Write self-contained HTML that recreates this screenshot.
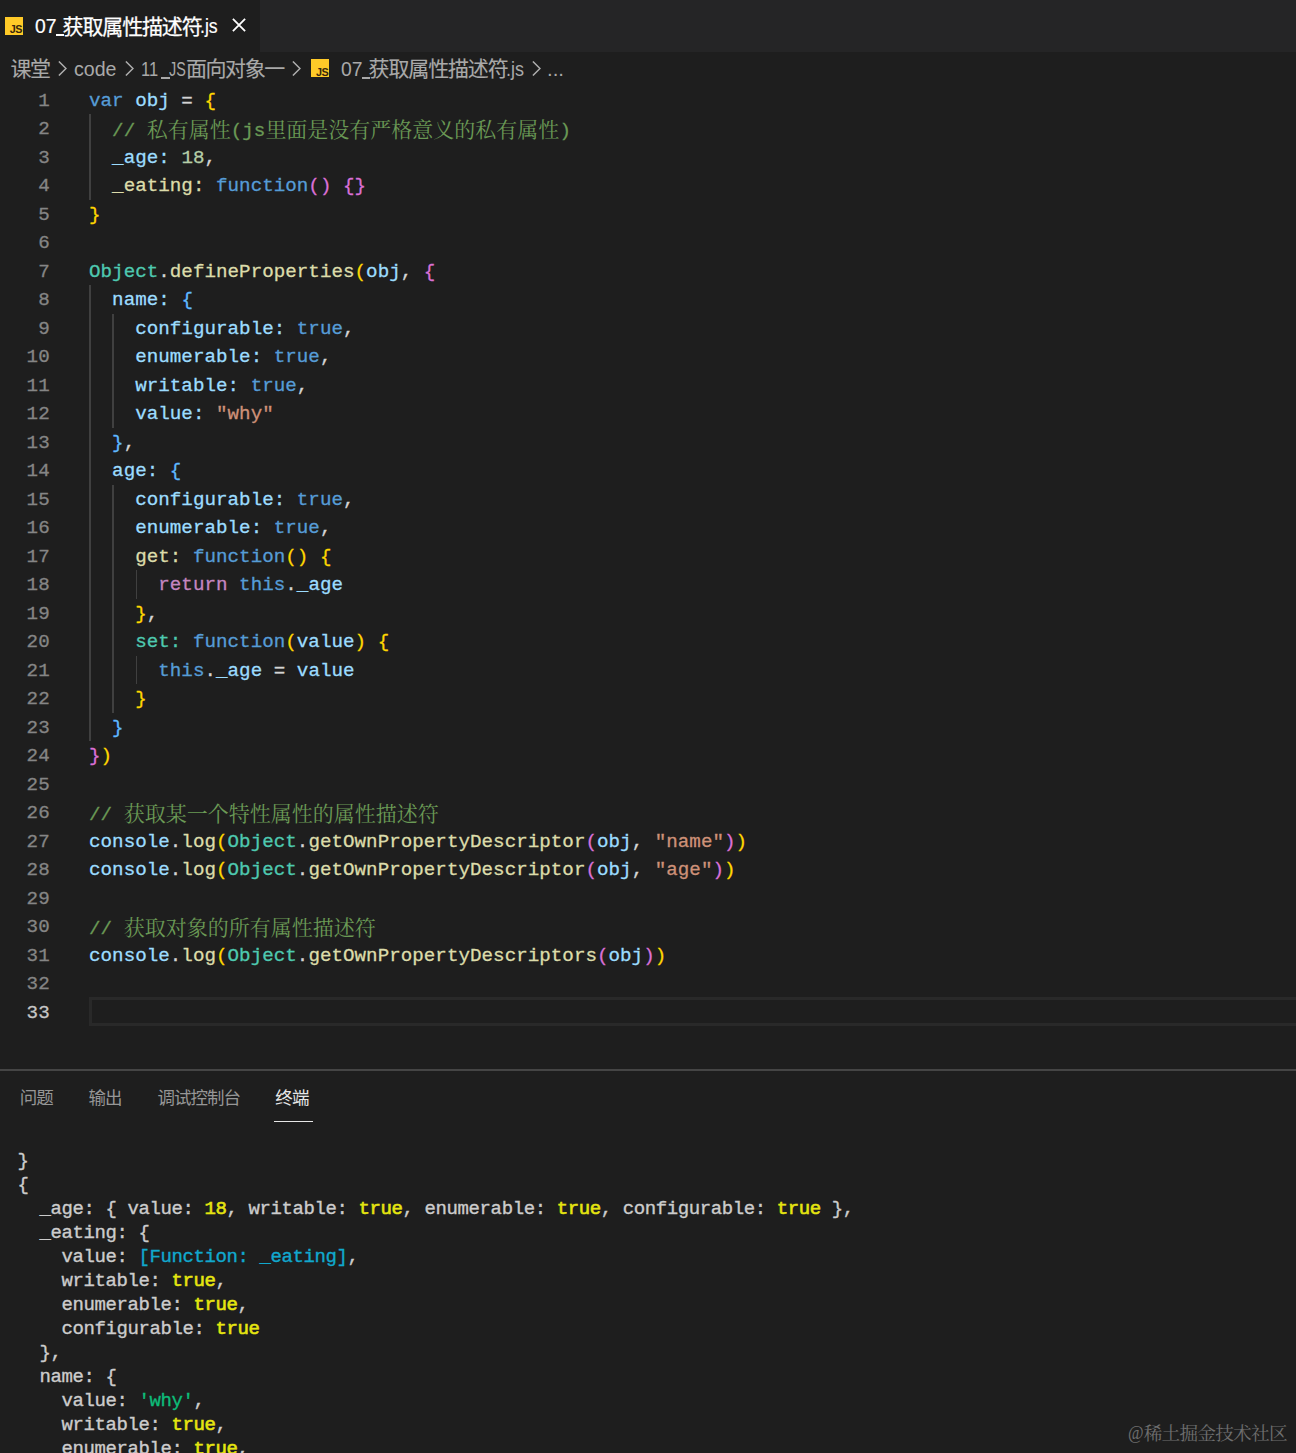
<!DOCTYPE html>
<html lang="zh"><head><meta charset="utf-8"><title>07_获取属性描述符.js</title>
<style>
*{margin:0;padding:0;box-sizing:border-box}
html,body{width:1296px;height:1453px;background:#1e1e1e;overflow:hidden}
body{font-family:"Liberation Sans",sans-serif;position:relative}
#app{position:absolute;left:0;top:0;width:1296px;height:1453px;overflow:hidden;background:#1e1e1e}
.abs{position:absolute}
.cjt{display:block;white-space:pre;font-family:"Liberation Sans","Noto Sans CJK SC",sans-serif}
.cl .cjs{font-family:"Liberation Serif","Noto Serif CJK SC",serif;font-size:21px;letter-spacing:0;-webkit-text-stroke:0;position:relative;top:0.5px}
.tabbar{position:absolute;left:0;top:0;width:1296px;height:52px;background:#252526}
.tab{position:absolute;left:0;top:0;width:259.5px;height:52px;background:#1e1e1e}
.uit{position:absolute;white-space:pre;font-size:19.6px;line-height:24px;height:24px;transform-origin:0 50%;display:block}
.jsi{position:absolute;width:18px;height:18px;background:#ffca28}
.jsi span{position:absolute;right:1.2px;bottom:1.7px;font:bold 10.8px/8px "Liberation Sans",sans-serif;color:#37260c;letter-spacing:-0.55px}
.ln,.cl,.tl{position:absolute;font-family:"Liberation Mono",monospace;white-space:pre}
.ln,.cl{letter-spacing:0.03px;-webkit-text-stroke:0.3px currentColor}
.cl span{-webkit-text-stroke:0.3px currentColor}
.ln{left:0;width:49.7px;text-align:right;color:#858585;font-size:19.2px;height:28.5px;line-height:28.5px;margin-top:1.0px}
.ln.cur{color:#c6c6c6}
.cl{left:89.0px;color:#d4d4d4;font-size:19.2px;height:28.5px;line-height:28.5px;margin-top:1.0px}
.ig{position:absolute;width:1.5px}
.curline{position:absolute;left:89.3px;top:997px;width:1300px;height:28.9px;border:3px solid #292929}
.pborder{position:absolute;left:0;top:1069.4px;width:1296px;height:1.6px;background:#454545}
.tl{-webkit-text-stroke:0.35px currentColor;left:17.5px;color:#cccccc;font-size:19.0px;letter-spacing:-0.4px;height:24.0px;line-height:24.0px;margin-top:0px}
.ty{color:#e5e510;-webkit-text-stroke:0.6px #e5e510}
.ptab{position:absolute;top:1090.5px;height:17px}
.pul{position:absolute;left:274px;top:1120.5px;width:38.8px;height:1.5px;background:#e7e7e7}
.wm{position:absolute;left:1128.3px;top:1422.0px;white-space:pre;color:#6e6e6e;font-family:"Liberation Serif",serif;font-size:17.8px;line-height:22px;transform:scaleX(0.95);transform-origin:0 50%}
</style></head><body><div id="app">
<div class="tabbar"><div class="tab">
<div class="jsi" style="left:5px;top:17px"><span>JS</span></div>
<span class="uit" style="left:34.94px;top:14.0px;color:#ffffff;font-size:19.6px;transform:scaleX(0.9875);-webkit-text-stroke:0.2px #ffffff">07</span><i class="abs" style="left:55.7px;top:34.3px;width:8.00px;height:1.6px;background:#ffffff"></i>
<span class="abs" style="left:62.60px;top:15.50px;line-height:0"><span class="cjt" style="font-size:21px;line-height:21px;height:21px;letter-spacing:-1.15px;color:#ffffff;-webkit-text-stroke:0.25px #ffffff">获取属性描述符</span></span>
<span class="uit" style="left:200.39px;top:14.0px;color:#ffffff;font-size:19.6px;transform:scaleX(0.9005);-webkit-text-stroke:0.2px #ffffff">.js</span>
<svg class="abs" style="left:231px;top:17.3px" width="16" height="16" viewBox="0 0 16 16"><path d="M1.9 1.9 L14.1 14.1 M14.1 1.9 L1.9 14.1" stroke="#ffffff" stroke-width="1.8" fill="none"/></svg>
</div></div>
<div class="bc">
<span class="abs" style="left:10.50px;top:58.00px;line-height:0"><span class="cjt" style="font-size:21px;line-height:21px;height:21px;letter-spacing:-1.4px;color:#a9a9a9;-webkit-text-stroke:0.12px #a9a9a9">课堂</span></span>
<svg class="abs" style="left:58.2px;top:60.5px" width="9" height="15" viewBox="0 0 9 15"><path d="M0.9 0.5 L8 7.5 L0.9 14.5" fill="none" stroke="#adadad" stroke-width="1.55"/></svg>
<span class="uit" style="left:73.97px;top:57.0px;color:#a9a9a9;font-size:19.6px;transform:scaleX(1.0000);-webkit-text-stroke:0px #a9a9a9">code</span>
<svg class="abs" style="left:124.9px;top:60.5px" width="9" height="15" viewBox="0 0 9 15"><path d="M0.9 0.5 L8 7.5 L0.9 14.5" fill="none" stroke="#adadad" stroke-width="1.55"/></svg>
<span class="uit" style="left:140.74px;top:57.0px;color:#a9a9a9;font-size:19.6px;transform:scaleX(0.8423);-webkit-text-stroke:0px #a9a9a9">11</span><i class="abs" style="left:161.1px;top:77.3px;width:8.80px;height:1.6px;background:#a9a9a9"></i><span class="uit" style="left:169.48px;top:57.0px;color:#a9a9a9;font-size:19.6px;transform:scaleX(0.7338);-webkit-text-stroke:0px #a9a9a9">JS</span>
<span class="abs" style="left:185.90px;top:58.00px;line-height:0"><span class="cjt" style="font-size:21px;line-height:21px;height:21px;letter-spacing:-1.4px;color:#a9a9a9;-webkit-text-stroke:0.12px #a9a9a9">面向对象一</span></span>
<svg class="abs" style="left:292.2px;top:60.5px" width="9" height="15" viewBox="0 0 9 15"><path d="M0.9 0.5 L8 7.5 L0.9 14.5" fill="none" stroke="#adadad" stroke-width="1.55"/></svg>
<div class="jsi" style="left:311.3px;top:59.3px"><span>JS</span></div>
<span class="uit" style="left:340.84px;top:57.0px;color:#a9a9a9;font-size:19.6px;transform:scaleX(0.9875);-webkit-text-stroke:0px #a9a9a9">07</span><i class="abs" style="left:361.6px;top:77.3px;width:8.00px;height:1.6px;background:#a9a9a9"></i>
<span class="abs" style="left:368.60px;top:58.00px;line-height:0"><span class="cjt" style="font-size:21px;line-height:21px;height:21px;letter-spacing:-1.15px;color:#a9a9a9;-webkit-text-stroke:0.12px #a9a9a9">获取属性描述符</span></span>
<span class="uit" style="left:506.26px;top:57.0px;color:#a9a9a9;font-size:19.6px;transform:scaleX(0.9180);-webkit-text-stroke:0px #a9a9a9">.js</span>
<svg class="abs" style="left:532.0px;top:60.5px" width="9" height="15" viewBox="0 0 9 15"><path d="M0.9 0.5 L8 7.5 L0.9 14.5" fill="none" stroke="#adadad" stroke-width="1.55"/></svg>
<span class="uit" style="left:546.73px;top:57.0px;color:#a9a9a9;font-size:19.6px;transform:scaleX(1.0425);-webkit-text-stroke:0px #a9a9a9">...</span>
</div>
<div class="editor">
<div class="ig" style="left:89.30px;top:114.00px;height:85.50px;background:#404040"></div><div class="ig" style="left:89.30px;top:285.00px;height:456.00px;background:#404040"></div><div class="ig" style="left:112.40px;top:313.50px;height:114.00px;background:#404040"></div><div class="ig" style="left:112.40px;top:484.50px;height:228.00px;background:#404040"></div><div class="ig" style="left:135.50px;top:570.00px;height:28.50px;background:#404040"></div><div class="ig" style="left:135.50px;top:655.50px;height:28.50px;background:#404040"></div>
<div class="curline"></div>
<div class="ln" style="top:85.50px">1</div><div class="cl" style="top:85.50px"><span style="color:#569cd6">var</span> <span style="color:#9cdcfe">obj</span><span style="color:#d4d4d4"> = </span><span style="color:#ffd700">{</span></div><div class="ln" style="top:114.00px">2</div><div class="cl" style="top:114.00px">  <span style="color:#6a9955">// <span class="cjs">私有属性</span>(js<span class="cjs">里面是没有严格意义的私有属性</span>)</span></div><div class="ln" style="top:142.50px">3</div><div class="cl" style="top:142.50px">  <span style="color:#9cdcfe">_age:</span> <span style="color:#b5cea8">18</span><span style="color:#d4d4d4">,</span></div><div class="ln" style="top:171.00px">4</div><div class="cl" style="top:171.00px">  <span style="color:#dcdcaa">_eating:</span> <span style="color:#569cd6">function</span><span style="color:#da70d6">()</span> <span style="color:#da70d6">{}</span></div><div class="ln" style="top:199.50px">5</div><div class="cl" style="top:199.50px"><span style="color:#ffd700">}</span></div><div class="ln" style="top:228.00px">6</div><div class="ln" style="top:256.50px">7</div><div class="cl" style="top:256.50px"><span style="color:#4ec9b0">Object</span><span style="color:#d4d4d4">.</span><span style="color:#dcdcaa">defineProperties</span><span style="color:#ffd700">(</span><span style="color:#9cdcfe">obj</span><span style="color:#d4d4d4">, </span><span style="color:#da70d6">{</span></div><div class="ln" style="top:285.00px">8</div><div class="cl" style="top:285.00px">  <span style="color:#9cdcfe">name:</span> <span style="color:#5fb8ff">{</span></div><div class="ln" style="top:313.50px">9</div><div class="cl" style="top:313.50px">    <span style="color:#9cdcfe">configurable:</span> <span style="color:#569cd6">true</span><span style="color:#d4d4d4">,</span></div><div class="ln" style="top:342.00px">10</div><div class="cl" style="top:342.00px">    <span style="color:#9cdcfe">enumerable:</span> <span style="color:#569cd6">true</span><span style="color:#d4d4d4">,</span></div><div class="ln" style="top:370.50px">11</div><div class="cl" style="top:370.50px">    <span style="color:#9cdcfe">writable:</span> <span style="color:#569cd6">true</span><span style="color:#d4d4d4">,</span></div><div class="ln" style="top:399.00px">12</div><div class="cl" style="top:399.00px">    <span style="color:#9cdcfe">value:</span> <span style="color:#ce9178">&quot;why&quot;</span></div><div class="ln" style="top:427.50px">13</div><div class="cl" style="top:427.50px">  <span style="color:#5fb8ff">}</span><span style="color:#d4d4d4">,</span></div><div class="ln" style="top:456.00px">14</div><div class="cl" style="top:456.00px">  <span style="color:#9cdcfe">age:</span> <span style="color:#5fb8ff">{</span></div><div class="ln" style="top:484.50px">15</div><div class="cl" style="top:484.50px">    <span style="color:#9cdcfe">configurable:</span> <span style="color:#569cd6">true</span><span style="color:#d4d4d4">,</span></div><div class="ln" style="top:513.00px">16</div><div class="cl" style="top:513.00px">    <span style="color:#9cdcfe">enumerable:</span> <span style="color:#569cd6">true</span><span style="color:#d4d4d4">,</span></div><div class="ln" style="top:541.50px">17</div><div class="cl" style="top:541.50px">    <span style="color:#dcdcaa">get:</span> <span style="color:#569cd6">function</span><span style="color:#ffd700">()</span> <span style="color:#ffd700">{</span></div><div class="ln" style="top:570.00px">18</div><div class="cl" style="top:570.00px">      <span style="color:#c586c0">return</span> <span style="color:#569cd6">this</span><span style="color:#d4d4d4">.</span><span style="color:#9cdcfe">_age</span></div><div class="ln" style="top:598.50px">19</div><div class="cl" style="top:598.50px">    <span style="color:#ffd700">}</span><span style="color:#d4d4d4">,</span></div><div class="ln" style="top:627.00px">20</div><div class="cl" style="top:627.00px">    <span style="color:#4ec9b0">set:</span> <span style="color:#569cd6">function</span><span style="color:#ffd700">(</span><span style="color:#9cdcfe">value</span><span style="color:#ffd700">)</span> <span style="color:#ffd700">{</span></div><div class="ln" style="top:655.50px">21</div><div class="cl" style="top:655.50px">      <span style="color:#569cd6">this</span><span style="color:#d4d4d4">.</span><span style="color:#9cdcfe">_age</span><span style="color:#d4d4d4"> = </span><span style="color:#9cdcfe">value</span></div><div class="ln" style="top:684.00px">22</div><div class="cl" style="top:684.00px">    <span style="color:#ffd700">}</span></div><div class="ln" style="top:712.50px">23</div><div class="cl" style="top:712.50px">  <span style="color:#5fb8ff">}</span></div><div class="ln" style="top:741.00px">24</div><div class="cl" style="top:741.00px"><span style="color:#da70d6">}</span><span style="color:#ffd700">)</span></div><div class="ln" style="top:769.50px">25</div><div class="ln" style="top:798.00px">26</div><div class="cl" style="top:798.00px"><span style="color:#6a9955">// <span class="cjs">获取某一个特性属性的属性描述符</span></span></div><div class="ln" style="top:826.50px">27</div><div class="cl" style="top:826.50px"><span style="color:#9cdcfe">console</span><span style="color:#d4d4d4">.</span><span style="color:#dcdcaa">log</span><span style="color:#ffd700">(</span><span style="color:#4ec9b0">Object</span><span style="color:#d4d4d4">.</span><span style="color:#dcdcaa">getOwnPropertyDescriptor</span><span style="color:#da70d6">(</span><span style="color:#9cdcfe">obj</span><span style="color:#d4d4d4">, </span><span style="color:#ce9178">&quot;name&quot;</span><span style="color:#da70d6">)</span><span style="color:#ffd700">)</span></div><div class="ln" style="top:855.00px">28</div><div class="cl" style="top:855.00px"><span style="color:#9cdcfe">console</span><span style="color:#d4d4d4">.</span><span style="color:#dcdcaa">log</span><span style="color:#ffd700">(</span><span style="color:#4ec9b0">Object</span><span style="color:#d4d4d4">.</span><span style="color:#dcdcaa">getOwnPropertyDescriptor</span><span style="color:#da70d6">(</span><span style="color:#9cdcfe">obj</span><span style="color:#d4d4d4">, </span><span style="color:#ce9178">&quot;age&quot;</span><span style="color:#da70d6">)</span><span style="color:#ffd700">)</span></div><div class="ln" style="top:883.50px">29</div><div class="ln" style="top:912.00px">30</div><div class="cl" style="top:912.00px"><span style="color:#6a9955">// <span class="cjs">获取对象的所有属性描述符</span></span></div><div class="ln" style="top:940.50px">31</div><div class="cl" style="top:940.50px"><span style="color:#9cdcfe">console</span><span style="color:#d4d4d4">.</span><span style="color:#dcdcaa">log</span><span style="color:#ffd700">(</span><span style="color:#4ec9b0">Object</span><span style="color:#d4d4d4">.</span><span style="color:#dcdcaa">getOwnPropertyDescriptors</span><span style="color:#da70d6">(</span><span style="color:#9cdcfe">obj</span><span style="color:#da70d6">)</span><span style="color:#ffd700">)</span></div><div class="ln" style="top:969.00px">32</div><div class="ln cur" style="top:997.50px">33</div>
</div>
<div class="pborder"></div>
<span class="abs" style="left:19.70px;top:1090.00px;line-height:0"><span class="cjt" style="font-size:17.5px;line-height:17.5px;height:17.5px;letter-spacing:-0.9px;color:#969696">问题</span></span>
<span class="abs" style="left:88.40px;top:1090.00px;line-height:0"><span class="cjt" style="font-size:17.5px;line-height:17.5px;height:17.5px;letter-spacing:-0.9px;color:#969696">输出</span></span>
<span class="abs" style="left:157.50px;top:1090.00px;line-height:0"><span class="cjt" style="font-size:17.5px;line-height:17.5px;height:17.5px;letter-spacing:-1.0px;color:#969696">调试控制台</span></span>
<span class="abs" style="left:275.30px;top:1090.00px;line-height:0"><span class="cjt" style="font-size:17.5px;line-height:17.5px;height:17.5px;letter-spacing:-0.7px;color:#e7e7e7">终端</span></span>
<div class="pul"></div>
<div class="term">
<div class="tl" style="top:1148.50px">}</div><div class="tl" style="top:1172.50px">{</div><div class="tl" style="top:1196.50px">  _age: { value: <span class="ty">18</span>, writable: <span class="ty">true</span>, enumerable: <span class="ty">true</span>, configurable: <span class="ty">true</span> },</div><div class="tl" style="top:1220.50px">  _eating: {</div><div class="tl" style="top:1244.50px">    value: <span style="color:#11a8cd">[Function: _eating]</span>,</div><div class="tl" style="top:1268.50px">    writable: <span class="ty">true</span>,</div><div class="tl" style="top:1292.50px">    enumerable: <span class="ty">true</span>,</div><div class="tl" style="top:1316.50px">    configurable: <span class="ty">true</span></div><div class="tl" style="top:1340.50px">  },</div><div class="tl" style="top:1364.50px">  name: {</div><div class="tl" style="top:1388.50px">    value: <span style="color:#0dbc79">'why'</span>,</div><div class="tl" style="top:1412.50px">    writable: <span class="ty">true</span>,</div><div class="tl" style="top:1436.50px">    enumerable: <span class="ty">true</span>,</div>
</div>
<div class="wm">@</div><span class="abs" style="left:1143.70px;top:1424.80px;line-height:0"><span class="cjt" style="font-family:'Liberation Serif','Noto Serif CJK SC',serif;font-size:18.7px;line-height:18.7px;height:18.7px;letter-spacing:-0.8px;color:#6e6e6e">稀土掘金技术社区</span></span>
</div></body></html>
